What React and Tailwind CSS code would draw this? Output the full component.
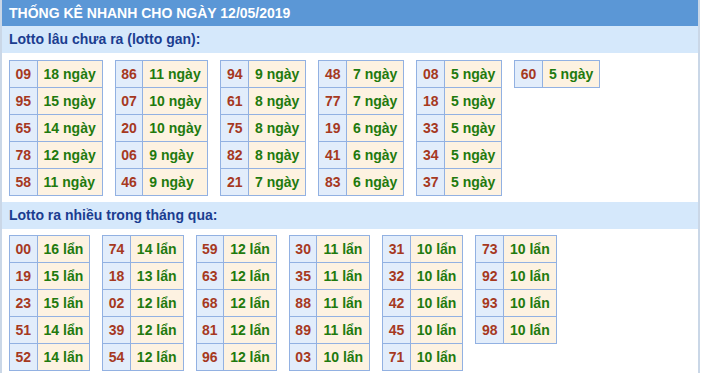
import React from "react";

const gan = [
  [["09", 18], ["95", 15], ["65", 14], ["78", 12], ["58", 11]],
  [["86", 11], ["07", 10], ["20", 10], ["06", 9], ["46", 9]],
  [["94", 9], ["61", 8], ["75", 8], ["82", 8], ["21", 7]],
  [["48", 7], ["77", 7], ["19", 6], ["41", 6], ["83", 6]],
  [["08", 5], ["18", 5], ["33", 5], ["34", 5], ["37", 5]],
  [["60", 5]],
];

const nhieu = [
  [["00", 16], ["19", 15], ["23", 15], ["51", 14], ["52", 14]],
  [["74", 14], ["18", 13], ["02", 12], ["39", 12], ["54", 12]],
  [["59", 12], ["63", 12], ["68", 12], ["81", 12], ["96", 12]],
  [["30", 11], ["35", 11], ["88", 11], ["89", 11], ["03", 10]],
  [["31", 10], ["32", 10], ["42", 10], ["45", 10], ["71", 10]],
  [["73", 10], ["92", 10], ["93", 10], ["98", 10]],
];

function LotoTable({ rows, unit }) {
  return (
    <table className="border-collapse">
      <tbody>
        {rows.map(([n, v], i) => (
          <tr key={i}>
            <td className="border border-[#92b1e2] bg-[#e2edfb] px-[5.5px] py-[5px] leading-[16px] text-[#a6391f]">
              {n}
            </td>
            <td className="border border-[#92b1e2] bg-[#fdf2e1] px-[6px] py-[5px] leading-[16px] text-[#1f7a0e] whitespace-nowrap">
              {v} {unit}
            </td>
          </tr>
        ))}
      </tbody>
    </table>
  );
}

export default function App() {
  return (
    <div
      className="w-[700px] min-h-[373px] border-x-2 border-[#cad7e7] bg-white font-bold text-[14px]"
      style={{ fontFamily: '"Liberation Sans", Arial, sans-serif' }}
    >
      <div className="h-[26px] bg-[#5b97d6] pl-[7px] flex items-center text-white">
        THỐNG KÊ NHANH CHO NGÀY 12/05/2019
      </div>
      <div className="h-[27px] bg-[#d5e8fb] pl-[7px] flex items-center text-[#1b3d90]">
        Lotto lâu chưa ra (lotto gan):
      </div>
      <div className="flex items-start gap-[12px] pl-[7px] pt-[7px] pb-[6px]">
        {gan.map((t, i) => (
          <LotoTable key={i} rows={t} unit="ngày" />
        ))}
      </div>
      <div className="h-[27px] bg-[#d5e8fb] pl-[7px] flex items-center text-[#1b3d90]">
        Lotto ra nhiều trong tháng qua:
      </div>
      <div className="flex items-start gap-[12px] pl-[7px] pt-[6px]">
        {nhieu.map((t, i) => (
          <LotoTable key={i} rows={t} unit="lẩn" />
        ))}
      </div>
    </div>
  );
}
